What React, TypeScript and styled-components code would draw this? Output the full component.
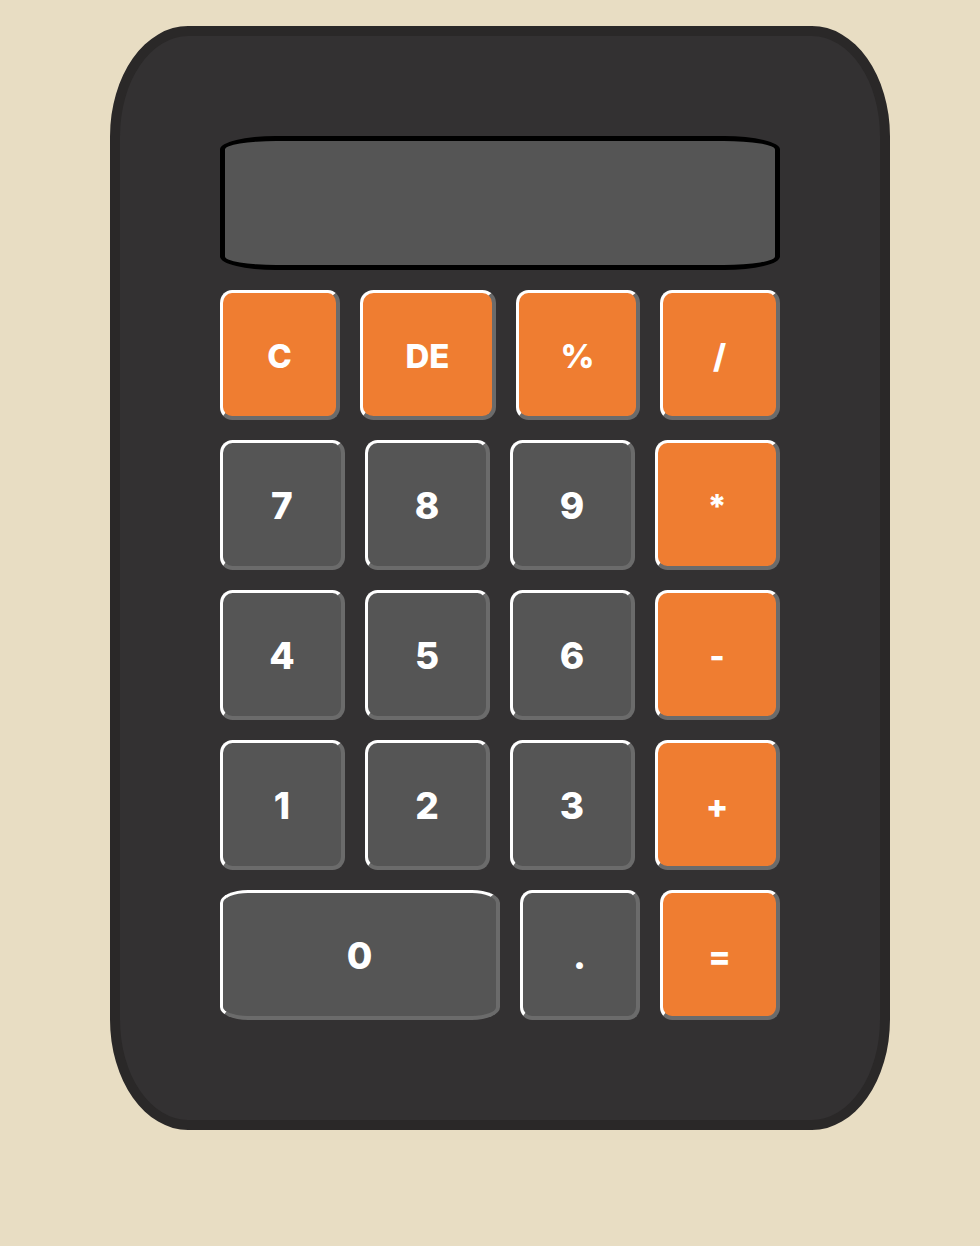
import React from "react";
import styled, { createGlobalStyle } from "styled-components";

const Global = createGlobalStyle`
  html, body { margin: 0; padding: 0; background: #e8ddc3; }
  body { font-family: Inter, "Liberation Sans", Arial, sans-serif; }
`;

const Page = styled.div`
  padding: 26px 0 0 110px;
  min-height: 1246px;
  box-sizing: border-box;
`;

const Body = styled.div`
  width: 780px;
  box-sizing: border-box;
  background: #333132;
  border: 10px solid #2a2828;
  border-radius: 10%;
  padding: 100px;
  display: flex;
  flex-direction: column;
  gap: 20px;
`;

const Display = styled.div`
  height: 134px;
  box-sizing: border-box;
  background: #555555;
  border: 5px solid #000;
  border-radius: 10%;
`;

const Row = styled.div`
  display: flex;
  gap: 20px;
`;

const Key = styled.button<{ $w: number; $accent?: boolean }>`
  width: ${(p) => p.$w}px;
  height: 130px;
  box-sizing: border-box;
  flex: none;
  border-style: solid;
  border-width: 3px 4px 4px 3px;
  border-color: #ffffff #6b6b6b #6b6b6b #ffffff;
  border-radius: 10%;
  background: ${(p) => (p.$accent ? "#ef7d31" : "#555555")};
  color: #ffffff;
  font-family: Inter, "Liberation Sans", Arial, sans-serif;
  font-weight: 800;
  font-size: ${(p) => (p.$accent ? 33 : 37)}px;
  display: flex;
  align-items: center;
  justify-content: center;
  padding: 2px 0 0;
  cursor: pointer;
`;

type K = { label: string; w: number; accent?: boolean };

const rows: K[][] = [
  [
    { label: "C", w: 120, accent: true },
    { label: "DE", w: 136, accent: true },
    { label: "%", w: 124, accent: true },
    { label: "/", w: 120, accent: true },
  ],
  [
    { label: "7", w: 125 },
    { label: "8", w: 125 },
    { label: "9", w: 125 },
    { label: "*", w: 125, accent: true },
  ],
  [
    { label: "4", w: 125 },
    { label: "5", w: 125 },
    { label: "6", w: 125 },
    { label: "-", w: 125, accent: true },
  ],
  [
    { label: "1", w: 125 },
    { label: "2", w: 125 },
    { label: "3", w: 125 },
    { label: "+", w: 125, accent: true },
  ],
  [
    { label: "0", w: 280 },
    { label: ".", w: 120 },
    { label: "=", w: 120, accent: true },
  ],
];

export default function App() {
  return (
    <>
      <Global />
      <Page>
        <Body>
          <Display />
          {rows.map((r, i) => (
            <Row key={i}>
              {r.map((k) => (
                <Key key={k.label} $w={k.w} $accent={k.accent}>
                  {k.label}
                </Key>
              ))}
            </Row>
          ))}
        </Body>
      </Page>
    </>
  );
}
